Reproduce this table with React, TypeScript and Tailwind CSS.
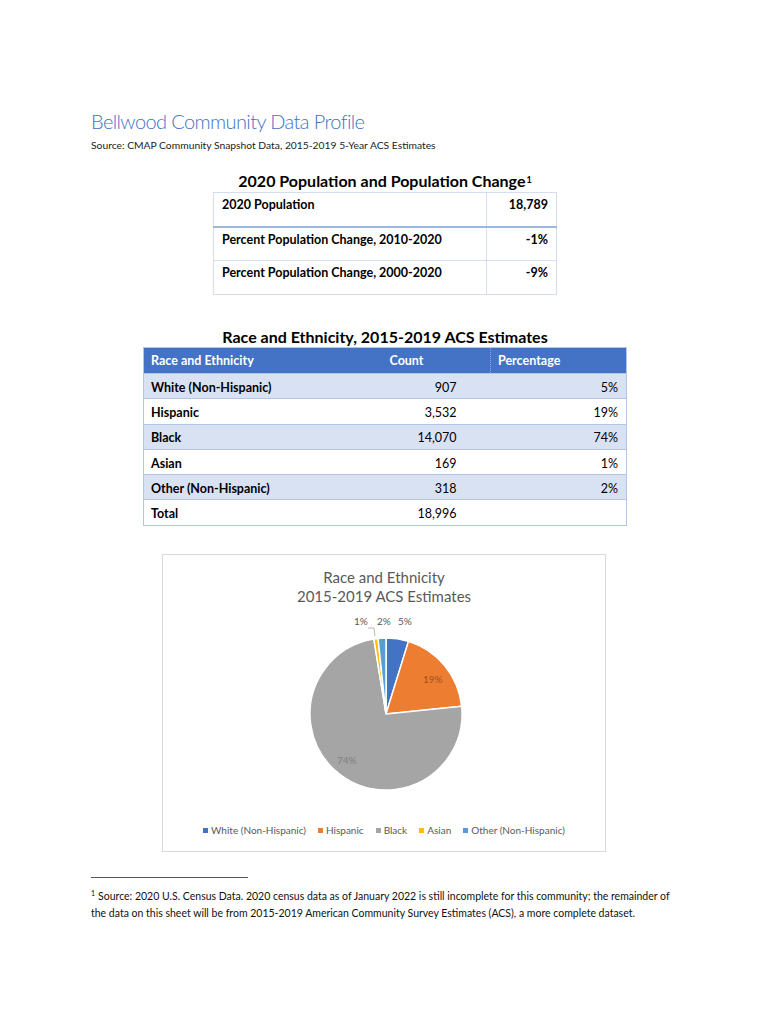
const font = { fontFamily: "Lato, 'Open Sans', Arial, sans-serif" };

const popRows = [
  { label: "2020 Population", value: "18,789" },
  { label: "Percent Population Change, 2010-2020", value: "-1%" },
  { label: "Percent Population Change, 2000-2020", value: "-9%" },
];

const raceRows = [
  { label: "White (Non-Hispanic)", count: "907", pct: "5%" },
  { label: "Hispanic", count: "3,532", pct: "19%" },
  { label: "Black", count: "14,070", pct: "74%" },
  { label: "Asian", count: "169", pct: "1%" },
  { label: "Other (Non-Hispanic)", count: "318", pct: "2%" },
  { label: "Total", count: "18,996", pct: "" },
];

const slices = [
  { name: "White (Non-Hispanic)", value: 907, color: "#4472c4" },
  { name: "Hispanic", value: 3532, color: "#ed7d31" },
  { name: "Black", value: 14070, color: "#a5a5a5" },
  { name: "Asian", value: 169, color: "#ffc000" },
  { name: "Other (Non-Hispanic)", value: 318, color: "#5b9bd5" },
];

const PieChart = () => {
  const cx = 223;
  const cy = 108;
  const r = 76;
  const total = slices.reduce((s, d) => s + d.value, 0);
  let acc = 0;
  const pt = (frac: number) => {
    const a = frac * Math.PI * 2 - Math.PI / 2;
    return [cx + r * Math.cos(a), cy + r * Math.sin(a)];
  };
  return (
    <svg width="442" height="204" className="block">
      {slices.map((s) => {
        const start = acc / total;
        acc += s.value;
        const end = acc / total;
        const [x1, y1] = pt(start);
        const [x2, y2] = pt(end);
        const large = end - start > 0.5 ? 1 : 0;
        return (
          <path
            key={s.name}
            d={`M${cx},${cy} L${x1},${y1} A${r},${r} 0 ${large} 1 ${x2},${y2} Z`}
            fill={s.color}
            stroke="#ffffff"
            strokeWidth="1.5"
          />
        );
      })}
      {/* data labels */}
      <g fontSize="10" fill="#595959" style={font}>
        <text x="191" y="19">1%</text>
        <text x="214" y="19">2%</text>
        <text x="235" y="19">5%</text>
        <text x="260" y="77" fill="#a0521f">19%</text>
        <text x="174" y="158" fill="#7f7f7f">74%</text>
      </g>
      <polyline points="205,22 211,22 212,30" fill="none" stroke="#a6a6a6" strokeWidth="0.8" />
    </svg>
  );
};

export default function App() {
  return (
    <div className="min-h-screen bg-white text-[#000000]" style={font}>
      <div className="pl-[91px] pt-[108px]">
        {/* Heading */}
        <h1 className="text-[20px] leading-[26px] tracking-[-0.6px] font-light text-[#4472c4]">
          Bellwood Community Data Profile
        </h1>
        <p className="text-[10.3px] leading-[14px] mt-[4px] text-[#222222]">
          Source: CMAP Community Snapshot Data, 2015-2019 5-Year ACS Estimates
        </p>

        {/* Population table */}
        <div className="w-[344px] ml-[122px] mt-[19px]">
          <h2 className="text-[16px] leading-[20px] font-bold text-center">
            2020 Population and Population Change
            <sup className="text-[9px] ml-[1px]">1</sup>
          </h2>
          <table className="w-full border-collapse text-[12.5px] font-bold mt-[1px]">
            <tbody>
              {popRows.map((r, i) => (
                <tr
                  key={r.label}
                  className={
                    i === 0
                      ? "h-[34px] border-b-[2px] border-[#9cb8e0]"
                      : "h-[34px] border-b border-[#d4def0]"
                  }
                >
                  <td className="align-top pt-[3px] pl-[8px] border-l border-r border-t border-[#d4def0]">
                    {r.label}
                  </td>
                  <td className="align-top pt-[3px] pr-[8px] w-[70px] text-right border-r border-t border-[#d4def0]">
                    {r.value}
                  </td>
                </tr>
              ))}
            </tbody>
          </table>
        </div>

        {/* Race table */}
        <div className="w-[484px] ml-[52px] mt-[32px]">
          <h2 className="text-[16px] leading-[20px] font-bold text-center">
            Race and Ethnicity, 2015-2019 ACS Estimates
          </h2>
          <table className="w-full border-collapse text-[12.5px] border border-[#b4c6e7]">
            <thead>
              <tr className="h-[26px] bg-[#4472c4] text-white font-bold">
                <th className="text-left font-bold pl-[7px] pt-[2px] w-[239px]">Race and Ethnicity</th>
                <th className="text-left font-bold pl-[7px] pt-[2px] w-[108px]">Count</th>
                <th className="text-left font-bold pl-[7px] pt-[2px] border-l border-dotted border-[#8ea9db]">
                  Percentage
                </th>
              </tr>
            </thead>
            <tbody>
              {raceRows.map((r, i) => (
                <tr
                  key={r.label}
                  className={
                    i % 2 === 0
                      ? "h-[25.3px] bg-[#d9e2f3] border-t border-[#b4c6e7]"
                      : "h-[25.3px] bg-white border-t border-[#b4c6e7]"
                  }
                >
                  <td className="pl-[7px] pt-[4px] font-bold">{r.label}</td>
                  <td className="pr-[34px] pt-[4px] text-right">{r.count}</td>
                  <td className="pr-[8px] pt-[4px] text-right">{r.pct}</td>
                </tr>
              ))}
            </tbody>
          </table>
        </div>

        {/* Chart */}
        <div className="w-[444px] h-[298px] ml-[71px] mt-[28px] border border-[#d9d9d9] flex flex-col items-center">
          <div className="mt-[13px] text-[15px] leading-[19px] text-[#595959] text-center">
            <div>Race and Ethnicity</div>
            <div>2015-2019 ACS Estimates</div>
          </div>
          <PieChart />
          <div className="mt-[13px] flex items-center gap-[12px] text-[10px] text-[#595959]">
            {slices.map((s) => (
              <div key={s.name} className="flex items-center gap-[3px]">
                <span className="w-[5px] h-[5px] inline-block" style={{ backgroundColor: s.color }} />
                <span>{s.name}</span>
              </div>
            ))}
          </div>
        </div>

        {/* Footnote */}
        <div className="w-[157px] h-px bg-[#555555] mt-[25px]" />
        <div className="mt-[10px] text-[10.5px] leading-[17px] text-[#111111]">
          <sup className="text-[7px] mr-[3px]">1</sup>
          Source: 2020 U.S. Census Data. 2020 census data as of January 2022 is still incomplete for this community; the remainder of
          <br />
          the data on this sheet will be from 2015-2019 American Community Survey Estimates (ACS), a more complete dataset.
        </div>
      </div>
    </div>
  );
}
